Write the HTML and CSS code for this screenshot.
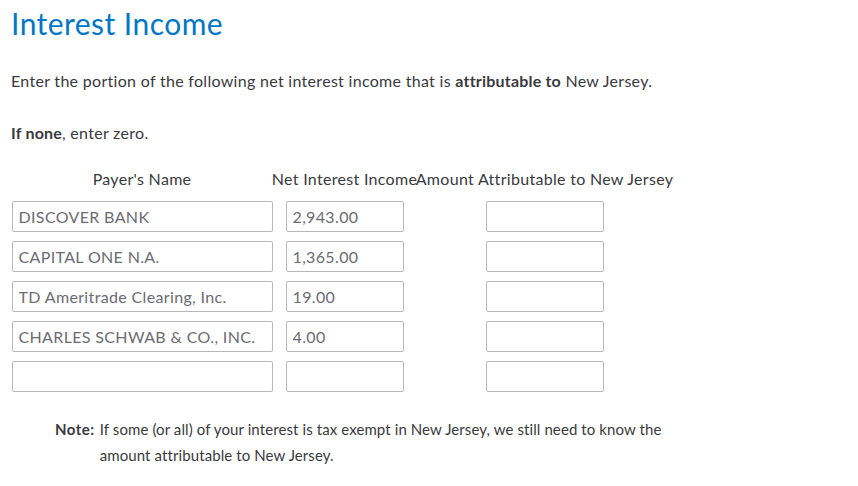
FILE: index.html
```html
<!DOCTYPE html>
<html>
<head>
<meta charset="utf-8">
<link rel="stylesheet" href="styles.css">
</head>
<body>
<main class="page">
  <h1 class="title">Interest Income</h1>
  <p class="lead">Enter the portion of the following net interest income that is <b>attributable to</b> New Jersey.</p>
  <p class="lead none"><b>If none</b>, enter zero.</p>
  <div class="grid">
    <div class="head">Payer's Name</div>
    <div class="head">Net Interest Income</div>
    <div class="head">Amount Attributable to New Jersey</div>

    <input class="inp wide" value="DISCOVER BANK">
    <input class="inp narrow" value="2,943.00">
    <input class="inp narrow" value="">

    <input class="inp wide" value="CAPITAL ONE N.A.">
    <input class="inp narrow" value="1,365.00">
    <input class="inp narrow" value="">

    <input class="inp wide" value="TD Ameritrade Clearing, Inc.">
    <input class="inp narrow" value="19.00">
    <input class="inp narrow" value="">

    <input class="inp wide" value="CHARLES SCHWAB &amp; CO., INC.">
    <input class="inp narrow" value="4.00">
    <input class="inp narrow" value="">

    <input class="inp wide" value="">
    <input class="inp narrow" value="">
    <input class="inp narrow" value="">
  </div>
  <div class="note">
    <b class="note-label">Note:</b>
    <span class="note-text">If some (or all) of your interest is tax exempt in New Jersey, we still need to know the amount attributable to New Jersey.</span>
  </div>
</main>
</body>
</html>
```

FILE: styles.css
```css
* { box-sizing: border-box; }
html, body { margin: 0; background: #fff; }
body {
  font-family: Lato, "Noto Sans", sans-serif;
  color: #393a3d;
}
.page { padding: 4px 11px 0 11px; }
.title {
  margin: 0;
  font-size: 30px;
  font-weight: 400;
  letter-spacing: 0.45px;
  color: #0077c5;
  line-height: 38px;
}
.lead {
  margin: 28px 0 0 0;
  font-size: 16px;
  letter-spacing: 0.3px;
  line-height: 22px;
}
.lead b { font-weight: 700; letter-spacing: 0.2px; }
.none { margin-top: 30px; }
.grid {
  display: grid;
  grid-template-columns: 262px 143px 257px;
  justify-items: center;
  row-gap: 9px;
  margin-top: 24px;
}
.head {
  font-size: 16px;
  letter-spacing: 0.3px;
  line-height: 22px;
  white-space: nowrap;
  margin-bottom: 2px;
}
.inp {
  height: 31px;
  border: 1px solid #b8b8bb;
  border-radius: 2px;
  padding: 0 6px;
  font-family: inherit;
  font-size: 16px;
  letter-spacing: 0.35px;
  color: #6b6c72;
  background: #fff;
}
.wide { width: 261px; }
.narrow { width: 118px; }
.note {
  display: flex;
  gap: 5px;
  margin: 24px 0 0 44px;
  font-size: 15px;
  letter-spacing: 0.1px;
  line-height: 26px;
  max-width: 620px;
}
.note-label { font-weight: 700; flex: none; letter-spacing: 0.5px; }
.note-text { flex: 1; }
```
